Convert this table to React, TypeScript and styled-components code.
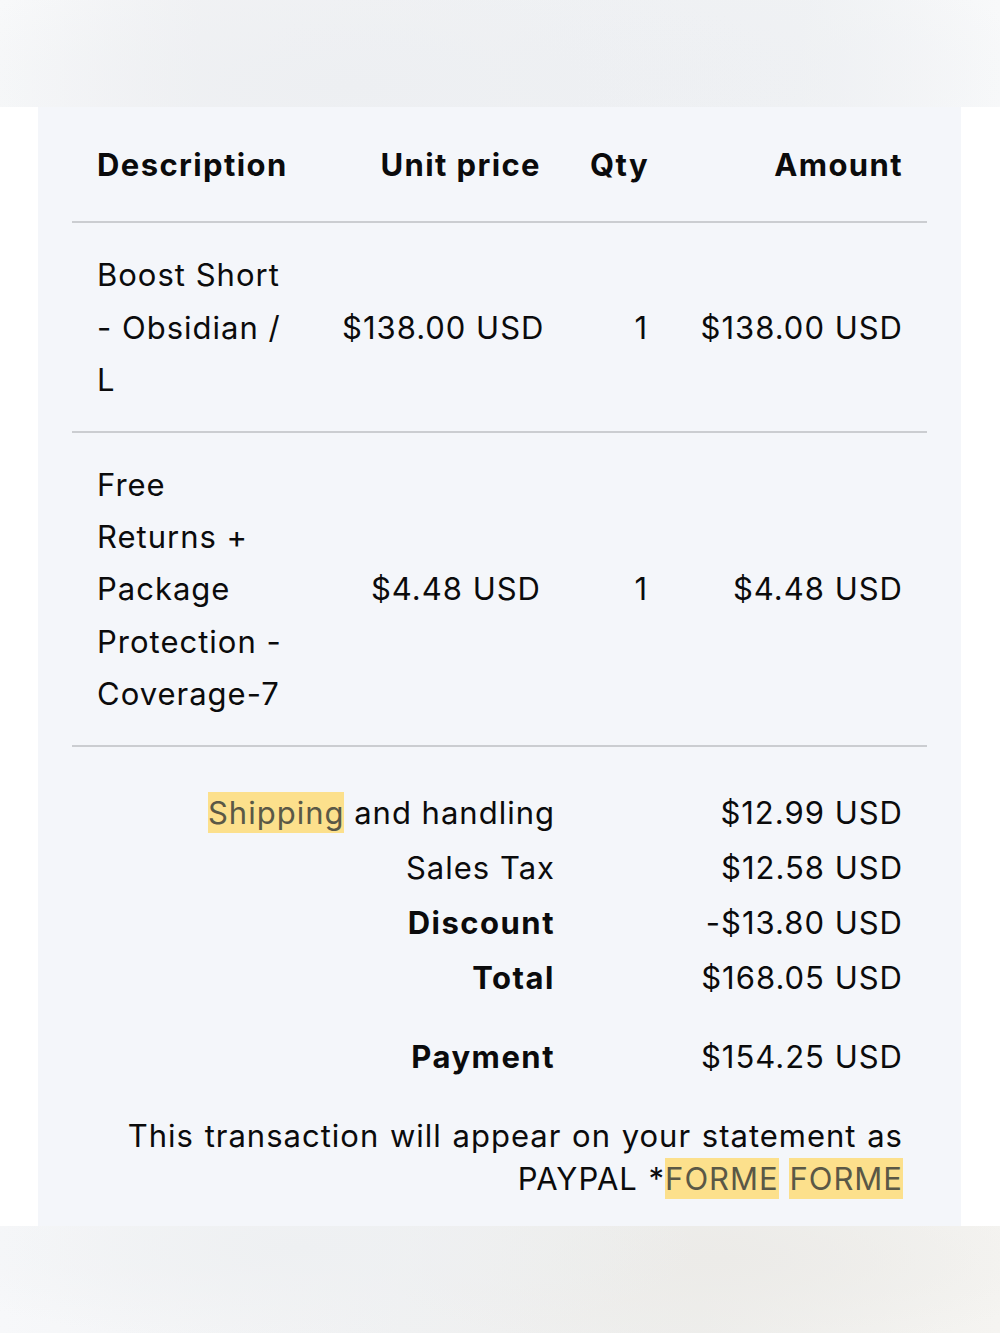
import React from "react";
import styled, { createGlobalStyle } from "styled-components";

const Global = createGlobalStyle`
  html, body { margin: 0; padding: 0; background: #ffffff; }
  body { font-family: Inter, "Noto Sans", sans-serif; color: #0b0b0c; }
`;

const Page = styled.div`
  width: 1000px;
  min-height: 1333px;
  display: flex;
  flex-direction: column;
  background: #ffffff;
`;

const Band = styled.div<{ $bottom?: boolean }>`
  height: ${(p) => (p.$bottom ? "108px" : "107px")};
  background: ${(p) =>
    p.$bottom
      ? `radial-gradient(ellipse 40% 90% at 30% 20%, #eef0f2 0%, rgba(238,240,242,0) 100%),
         radial-gradient(ellipse 35% 90% at 72% 30%, #ecebe8 0%, rgba(236,235,232,0) 100%),
         linear-gradient(90deg, #f7f8fa 0%, #f0f1f2 40%, #eeeeec 70%, #f5f4f1 100%)`
      : `radial-gradient(ellipse 45% 120% at 35% 80%, #edeff2 0%, rgba(237,239,242,0) 100%),
         radial-gradient(ellipse 40% 120% at 65% 70%, #eef0f3 0%, rgba(238,240,243,0) 100%),
         linear-gradient(90deg, #f8f9fa 0%, #f1f2f4 20%, #f0f2f4 80%, #f8f9fa 100%)`};
`;

const Middle = styled.div`
  display: flex;
  padding: 0 39px 0 38px;
`;

const Panel = styled.div`
  flex: 1;
  background: #f4f6fa;
  padding: 0 34px 26px;
`;

const Row = styled.div<{ $header?: boolean }>`
  display: grid;
  grid-template-columns: 245px 248px 107px 1fr;
  align-items: center;
  padding: ${(p) => (p.$header ? "32px 0 30px" : "26px 0 24px")};
  border-bottom: 2px solid #cbcdd1;
  font-size: 31px;
  line-height: 52.4px;
  font-weight: ${(p) => (p.$header ? 700 : 400)};
  letter-spacing: ${(p) => (p.$header ? "1.4px" : "1px")};
`;

const Cell = styled.div<{ $right?: boolean }>`
  padding: ${(p) => (p.$right ? "0 24px 0 25px" : "0 25px")};
  text-align: ${(p) => (p.$right ? "right" : "left")};
  white-space: nowrap;
`;

const Line = styled.span`
  display: block;
`;

const Summary = styled.div`
  display: grid;
  grid-template-columns: 458px 1fr;
  padding: 38px 24px 0 25px;
  font-size: 31px;
  line-height: 55px;
  letter-spacing: 1px;
`;

const Label = styled.div<{ $bold?: boolean; $gap?: boolean }>`
  text-align: right;
  font-weight: ${(p) => (p.$bold ? 700 : 400)};
  letter-spacing: ${(p) => (p.$bold ? "1.5px" : "1px")};
  margin-top: ${(p) => (p.$gap ? "24px" : "0")};
  white-space: nowrap;
`;

const Value = styled.div<{ $gap?: boolean }>`
  text-align: right;
  margin-top: ${(p) => (p.$gap ? "24px" : "0")};
  white-space: nowrap;
`;

const Mark = styled.mark`
  background: #fce08c;
  color: #5a5846;
  padding: 2px 0;
`;

const Statement = styled.div`
  padding: 30px 24px 0 25px;
  text-align: right;
  font-size: 31px;
  line-height: 43px;
  letter-spacing: 1px;
  word-spacing: 1px;
`;

const items = [
  { desc: ["Boost Short", "- Obsidian /", "L"], unit: "$138.00 USD", qty: "1", amount: "$138.00 USD" },
  {
    desc: ["Free", "Returns +", "Package", "Protection -", "Coverage-7"],
    unit: "$4.48 USD",
    qty: "1",
    amount: "$4.48 USD",
  },
];

export default function App() {
  return (
    <Page>
      <Global />
      <Band />
      <Middle>
        <Panel>
          <Row $header>
            <Cell>Description</Cell>
            <Cell $right>Unit price</Cell>
            <Cell $right>Qty</Cell>
            <Cell $right>Amount</Cell>
          </Row>
          {items.map((it) => (
            <Row key={it.unit}>
              <Cell>
                {it.desc.map((d) => (
                  <Line key={d}>{d}</Line>
                ))}
              </Cell>
              <Cell $right>{it.unit}</Cell>
              <Cell $right>{it.qty}</Cell>
              <Cell $right>{it.amount}</Cell>
            </Row>
          ))}
          <Summary>
            <Label>
              <Mark>Shipping</Mark> and handling
            </Label>
            <Value>$12.99 USD</Value>
            <Label>Sales Tax</Label>
            <Value>$12.58 USD</Value>
            <Label $bold>Discount</Label>
            <Value>-$13.80 USD</Value>
            <Label $bold>Total</Label>
            <Value>$168.05 USD</Value>
            <Label $bold $gap>
              Payment
            </Label>
            <Value $gap>$154.25 USD</Value>
          </Summary>
          <Statement>
            This transaction will appear on your statement as
            <br />
            PAYPAL *<Mark>FORME</Mark> <Mark>FORME</Mark>
          </Statement>
        </Panel>
      </Middle>
      <Band $bottom />
    </Page>
  );
}
